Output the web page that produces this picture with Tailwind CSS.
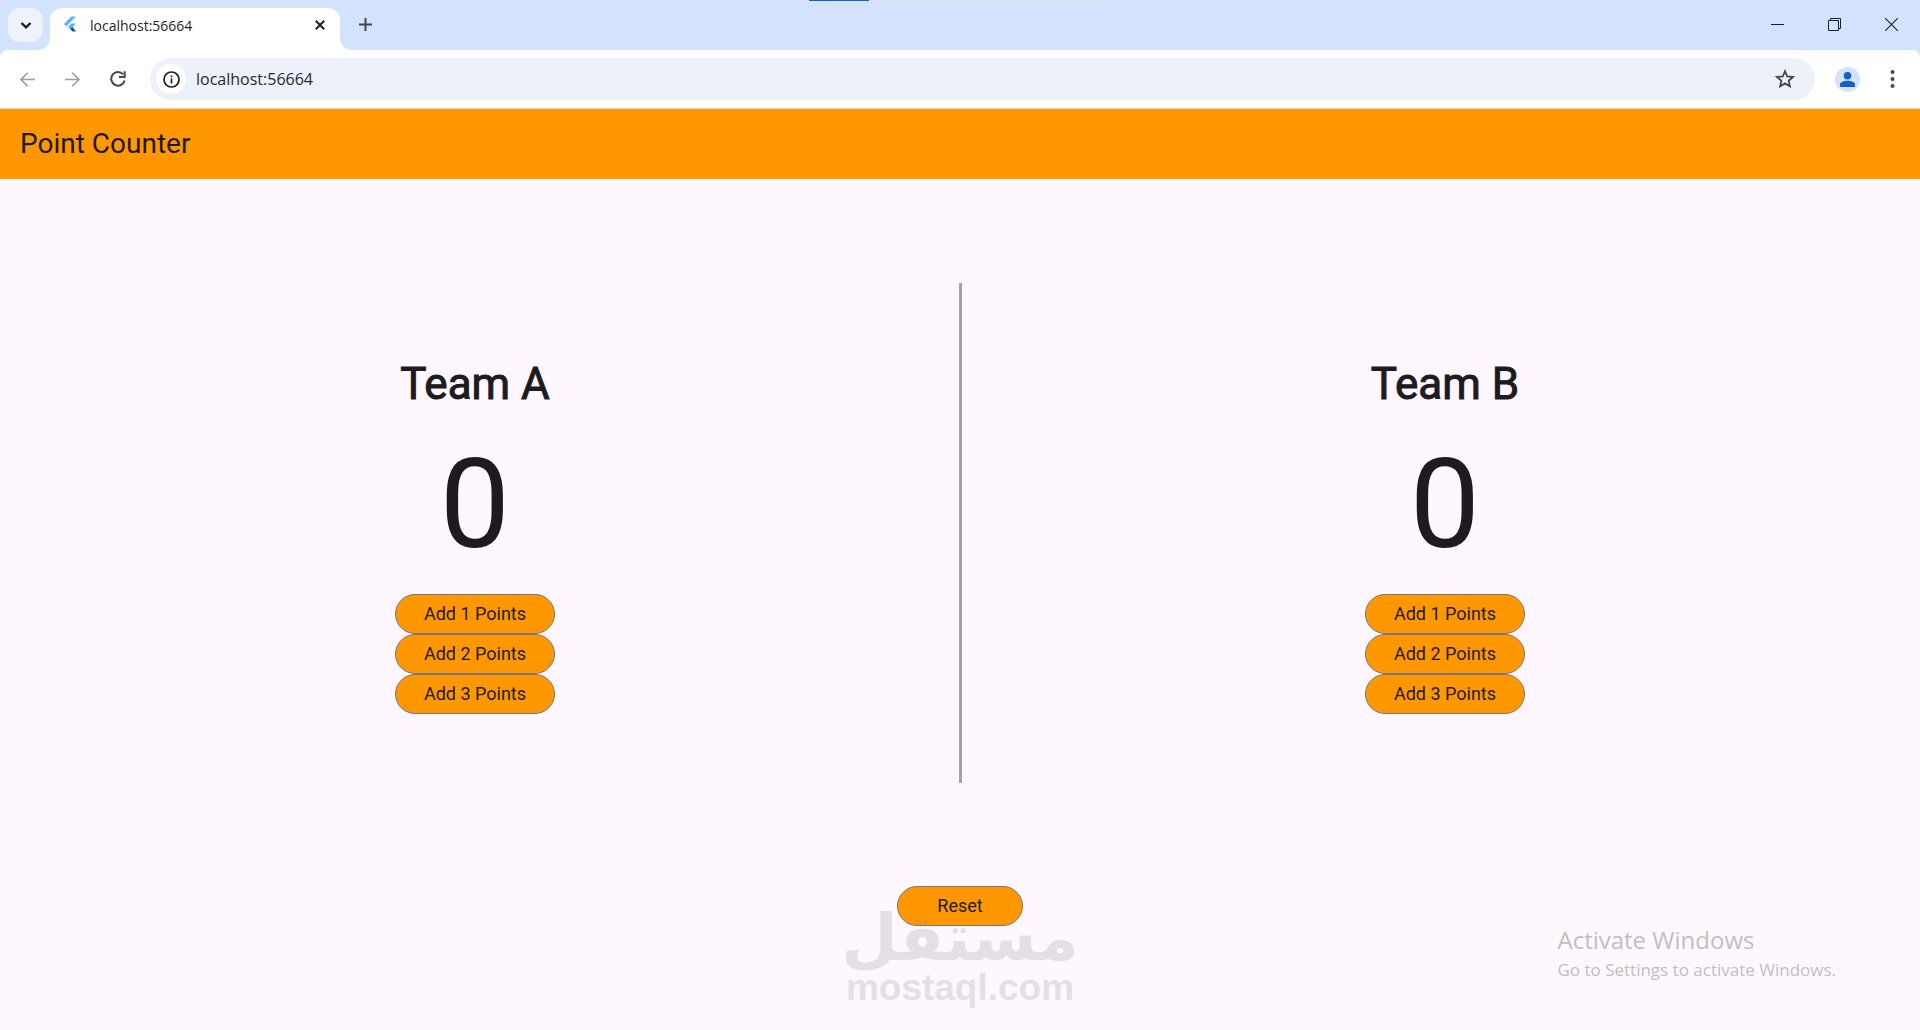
<!DOCTYPE html>
<html lang="en">
<head>
  <meta charset="UTF-8" />
  <meta name="viewport" content="width=device-width, initial-scale=1.0" />
  <title>Point Counter</title>
  <script src="https://cdn.jsdelivr.net/npm/@tailwindcss/browser@4"></script>
</head>
<body class="relative flex min-h-screen flex-col bg-[#fef7ff] font-['Roboto',sans-serif] text-[#1d1b20]">

  <!-- Tab strip -->
  <header class="bg-[#d3e2fd]">
    <div class="relative flex h-[50px] items-start pl-2 pt-2">
      <div class="absolute inset-x-0 top-0 flex h-px justify-center">
        <div class="flex w-[302px]">
          <div class="w-15 bg-[#1a5fc8]"></div>
          <div class="flex-1 bg-[#e3e1ea]"></div>
        </div>
      </div>
      <button aria-label="Search tabs" class="flex h-[34px] w-[35px] items-center justify-center rounded-xl bg-[#edf2fb]">
        <svg class="size-3" viewBox="0 0 12 12" fill="none" stroke="#1f1f1f" stroke-width="2.4"><path d="M1.5 4 L6 8.3 L10.500 4" /></svg>
      </button>
      <div class="relative ml-[7px] flex h-[42px] w-[290px] items-start rounded-t-xl bg-white pl-3 pr-[15px]">
        <svg class="absolute bottom-0 -left-3 size-3" viewBox="0 0 12 12"><path d="M12 0 V12 H0 A12 12 0 0 0 12 0Z" fill="#fff" /></svg>
        <svg class="absolute bottom-0 -right-3 size-3" viewBox="0 0 12 12"><path d="M0 0 V12 H12 A12 12 0 0 1 0 0Z" fill="#fff" /></svg>
        <svg class="mt-2 h-[17px] w-4" viewBox="0 0 16 17">
          <path d="M9.500 0.500 H14 L4.300 10.200 L2 8Z" fill="#54b3f2" />
          <path d="M9.500 7.500 H14 L8.300 13.200 L5.800 10.900Z" fill="#54b3f2" />
          <path d="M8.200 13.100 L10.500 11 L14 15.500 H10.500Z" fill="#0d4f95" />
        </svg>
        <span class="ml-3 mt-2 flex-1 font-['Open_Sans',sans-serif] text-sm leading-5 text-[#1f1f1f]">localhost:56664</span>
        <button aria-label="Close tab" class="mt-3">
          <svg class="size-[10px]" viewBox="0 0 10 10" stroke="#1f1f1f" stroke-width="2"><path d="M0.800 0.800 L9.200 9.200 M9.200 0.800 L0.800 9.200" /></svg>
        </button>
      </div>
      <button aria-label="New tab" class="ml-[19px] mt-[10px]">
        <svg class="size-[13px]" viewBox="0 0 13 13" stroke="#474747" stroke-width="2"><path d="M6.500 0 V13 M0 6.500 H13" /></svg>
      </button>
      <div class="ml-auto mr-[22px] flex items-center gap-11 pt-[10px]">
        <button aria-label="Minimize"><svg class="size-[13px]" viewBox="0 0 13 13" stroke="#1f1f1f"><path d="M0 6.500 H13" /></svg></button>
        <button aria-label="Restore"><svg class="size-[13px]" viewBox="0 0 13 13" fill="none" stroke="#1f1f1f"><path d="M0.500 2.500 H10.500 V12.500 H0.500Z M2.500 2.500 V0.500 H12.500 V10.500 H10.500" /></svg></button>
        <button aria-label="Close"><svg class="size-[13px]" viewBox="0 0 13 13" stroke="#1f1f1f" stroke-width="1.1"><path d="M0 0 L13 13 M13 0 L0 13" /></svg></button>
      </div>
    </div>

    <!-- Toolbar -->
    <div class="flex h-[59px] items-center rounded-t-lg border-b border-[#d5dbe5] bg-white pl-5 pr-[21px]">
      <button aria-label="Back"><svg class="size-[15px]" viewBox="0 0 15 15" fill="none" stroke="#a09d9d" stroke-width="1.6"><path d="M15 7.500 H1 M7.800 0.700 L1 7.500 L7.800 14.300" /></svg></button>
      <button aria-label="Forward" class="ml-[30px]"><svg class="size-[15px]" viewBox="0 0 15 15" fill="none" stroke="#a09d9d" stroke-width="1.6"><path d="M0 7.500 H14 M7.200 0.700 L14 7.500 L7.200 14.300" /></svg></button>
      <button aria-label="Reload" class="ml-[30px]">
        <svg class="size-4" viewBox="0 0 16 16" fill="none" stroke="#474747" stroke-width="2"><path d="M13.200 3.400 A6.800 6.800 0 1 0 14.600 9.500" /><path d="M14.700 0.300 V6 H9" /></svg>
      </button>
      <div class="ml-6 flex h-[42px] flex-1 items-center rounded-full bg-[#edf1fa] pl-[6px] pr-5">
        <button aria-label="Site information" class="flex size-[30px] items-center justify-center rounded-full bg-white">
          <svg class="size-[17px]" viewBox="0 0 17 17" fill="none" stroke="#1f1f1f" stroke-width="1.7"><circle cx="8.500" cy="8.500" r="7.500" /><path d="M8.500 7.500 V12.500 M8.500 4.400 V6.200" /></svg>
        </button>
        <input type="text" aria-label="Address" value="localhost:56664" class="ml-[10px] flex-1 bg-transparent font-['Open_Sans',sans-serif] text-base text-[#1f2937] outline-none" />
        <button aria-label="Bookmark this tab">
          <svg class="size-5" viewBox="0 0 20 20" fill="none" stroke="#474747" stroke-width="1.8"><path d="M10 2.200 L12.200 7.500 L18 8 L13.600 11.800 L14.900 17.400 L10 14.400 L5.100 17.400 L6.400 11.800 L2 8 L7.800 7.500Z" /></svg>
        </button>
      </div>
      <button aria-label="Profile" class="ml-5">
        <svg class="size-[25px]" viewBox="0 0 25 25" fill="#1560c4"><circle cx="12.500" cy="12.500" r="12.500" fill="#d3e2fd" /><circle cx="12.500" cy="8.700" r="3.800" /><path d="M5 20 V17.500 C5 15 9 13.800 12.500 13.800 S20 15 20 17.500 V20Z" /></svg>
      </button>
      <button aria-label="Menu" class="ml-[26px]">
        <svg class="h-[18px] w-[13px]" viewBox="0 0 13 18" fill="#474747"><circle cx="6.500" cy="2" r="2" /><circle cx="6.500" cy="9" r="2" /><circle cx="6.500" cy="16" r="2" /></svg>
      </button>
    </div>
  </header>

  <!-- App bar -->
  <div class="flex h-[70px] items-center bg-[#ff9800] px-5">
    <h1 class="text-[28px] leading-9">Point Counter</h1>
  </div>

  <main class="flex flex-1 flex-col items-center justify-evenly">
    <div class="flex h-[500px] w-full items-center justify-evenly">
      <section class="flex w-40 flex-col items-center">
        <h2 class="whitespace-nowrap text-[44px] leading-[64px] [-webkit-text-stroke:1px]">Team A</h2>
        <output id="scoreA" class="my-4 text-[125px] leading-[146px]">0</output>
        <button onclick="addPoints('A', 1)" class="h-10 w-full rounded-full border border-[#79747e] bg-[#ff9800] text-lg">Add 1 Points</button>
        <button onclick="addPoints('A', 2)" class="h-10 w-full rounded-full border border-[#79747e] bg-[#ff9800] text-lg">Add 2 Points</button>
        <button onclick="addPoints('A', 3)" class="h-10 w-full rounded-full border border-[#79747e] bg-[#ff9800] text-lg">Add 3 Points</button>
      </section>
      <div class="flex h-full w-5 justify-center">
        <div class="w-[3px] bg-[#a6a3a7]"></div>
      </div>
      <section class="flex w-40 flex-col items-center">
        <h2 class="whitespace-nowrap text-[44px] leading-[64px] [-webkit-text-stroke:1px]">Team B</h2>
        <output id="scoreB" class="my-4 text-[125px] leading-[146px]">0</output>
        <button onclick="addPoints('B', 1)" class="h-10 w-full rounded-full border border-[#79747e] bg-[#ff9800] text-lg">Add 1 Points</button>
        <button onclick="addPoints('B', 2)" class="h-10 w-full rounded-full border border-[#79747e] bg-[#ff9800] text-lg">Add 2 Points</button>
        <button onclick="addPoints('B', 3)" class="h-10 w-full rounded-full border border-[#79747e] bg-[#ff9800] text-lg">Add 3 Points</button>
      </section>
    </div>
    <button onclick="resetScores()" class="h-10 w-[126px] rounded-full border border-[#79747e] bg-[#ff9800] text-lg">Reset</button>
  </main>

  <!-- Watermark -->
  <div class="pointer-events-none absolute inset-x-0 bottom-6 flex flex-col items-center font-bold text-[#808080] opacity-20">
    <span lang="ar" dir="rtl" class="font-['DejaVu_Sans',sans-serif] text-[65px] leading-[64px]">مستقل</span>
    <span class="font-['Liberation_Sans',sans-serif] text-[37px] leading-9">mostaql.com</span>
  </div>

  <div class="pointer-events-none absolute bottom-[46px] right-[84px] font-['Open_Sans',sans-serif] text-[#c3bfbb]">
    <p class="text-2xl leading-8">Activate Windows</p>
    <p class="text-[17px] leading-7">Go to Settings to activate Windows.</p>
  </div>

  <script>
    const scores = { A: 0, B: 0 };

    function showScores() {
      document.getElementById("scoreA").textContent = scores.A;
      document.getElementById("scoreB").textContent = scores.B;
    }

    function addPoints(team, points) {
      scores[team] += points;
      showScores();
    }

    function resetScores() {
      scores.A = 0;
      scores.B = 0;
      showScores();
    }
  </script>

</body>
</html>
